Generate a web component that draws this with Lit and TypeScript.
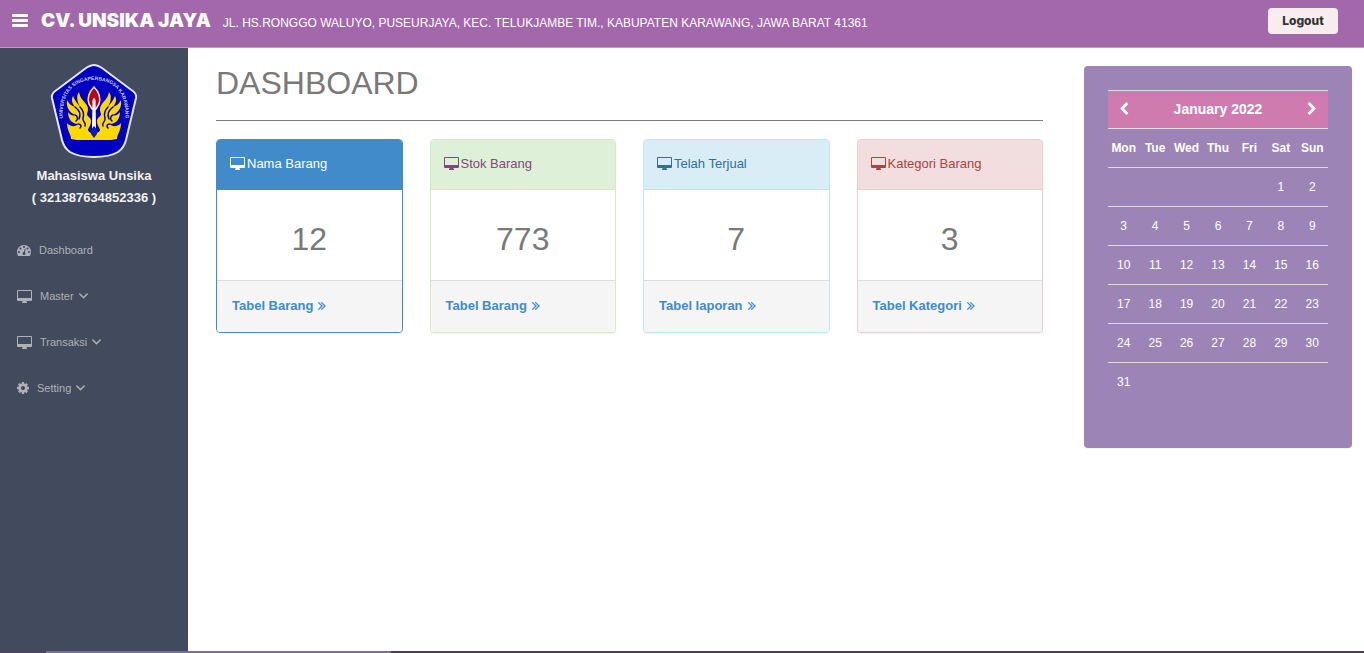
import { LitElement, html, css, svg, nothing } from "lit";
import { customElement, property, state } from "lit/decorators.js";

type Glyph = { box: string; path: string };

const GLYPHS: Record<string, Glyph> = {
  bars: {
    box: "0 0 16 14",
    path: "M1 0h14q1 0 1 1v1q0 1-1 1H1q-1 0-1-1V1q0-1 1-1zM1 5h14q1 0 1 1v1q0 1-1 1H1q-1 0-1-1V6q0-1 1-1zM1 10h14q1 0 1 1v1q0 1-1 1H1q-1 0-1-1v-1q0-1 1-1z",
  },
  desktop: {
    box: "0 0 15 13",
    path: "M1 0h13q1 0 1 1v9q0 1-1 1h-4.500v1h.5v1h-5v-1h.5v-1H1q-1 0-1-1V1q0-1 1-1zM1 1v7h13V1z",
  },
  gauge: {
    box: "0 128 1792 1536",
    path: "M384 1152q0-53-37.500-90.500t-90.500-37.500-90.500 37.500-37.500 90.500 37.500 90.500 90.500 37.500 90.500-37.500 37.500-90.500zm192-448q0-53-37.500-90.500t-90.500-37.500-90.500 37.500-37.500 90.500 37.500 90.500 90.500 37.500 90.500-37.500 37.500-90.500zm428 481l101-382q6-26-7.500-48.500t-38.500-29.500-48 6.500-30 39.500l-101 382q-60 5-107 43.500t-63 98.500q-20 77 20 146t117 89 146-20 89-117q16-60-6-117t-72-91zm660-33q0-53-37.500-90.500t-90.500-37.500-90.500 37.500-37.500 90.500 37.500 90.500 90.500 37.500 90.500-37.500 37.500-90.500zm-640-640q0-53-37.500-90.500t-90.500-37.500-90.500 37.500-37.500 90.500 37.500 90.500 90.500 37.500 90.500-37.500 37.500-90.500zm448 192q0-53-37.500-90.500t-90.500-37.500-90.500 37.500-37.500 90.500 37.500 90.500 90.500 37.500 90.500-37.500 37.500-90.500zm320 448q0 261-141 483-19 29-54 29h-1402q-35 0-54-29-141-221-141-483 0-182 71-348t191-286 286-191 348-71 348 71 286 191 191 286 71 348z",
  },
  cog: {
    box: "128 128 1536 1536",
    path: "M1152 896q0-106-75-181t-181-75-181 75-75 181 75 181 181 75 181-75 75-181zm512-109v222q0 12-8 23t-20 13l-185 28q-19 54-39 91 35 50 107 138 10 12 10 25t-9 23q-27 37-99 108t-94 71q-12 0-26-9l-138-108q-44 23-91 38-16 136-29 186-7 28-36 28h-222q-14 0-24.500-8.500t-11.500-21.500l-28-184q-49-16-90-37l-141 107q-10 9-25 9-14 0-25-11-126-114-165-168-7-10-7-23 0-12 8-23 15-21 51-66.500t54-70.500q-27-50-41-99l-183-27q-13-2-21-12.500t-8-23.500v-222q0-12 8-23t19-13l186-28q14-46 39-92-40-57-107-138-10-12-10-24 0-10 9-23 26-36 98.500-107.500t94.500-71.500q13 0 26 10l138 107q44-23 91-38 16-136 29-186 7-28 36-28h222q14 0 24.500 8.500t11.500 21.500l28 184q49 16 90 37l142-107q9-9 24-9 13 0 25 10 129 119 165 170 7 8 7 22 0 12-8 23-15 21-51 66.500t-54 70.500q26 50 41 98l183 28q13 2 21 12.500t8 23.500z",
  },
  down: {
    box: "384 640 1024 640",
    path: "M1395 736q0 13-10 23l-466 466q-10 10-23 10t-23-10l-466-466q-10-10-10-23t10-23l50-50q10-10 23-10t23 10l393 393 393-393q10-10 23-10t23 10l50 50q10 10 10 23z",
  },
  more: {
    box: "384 448 1024 1024",
    path: "M979 960q0 13-10 23l-466 466q-10 10-23 10t-23-10l-50-50q-10-10-10-23t10-23l393-393-393-393q-10-10-10-23t10-23l50-50q10-10 23-10t23 10l466 466q10 10 10 23zm384 0q0 13-10 23l-466 466q-10 10-23 10t-23-10l-50-50q-10-10-10-23t10-23l393-393-393-393q-10-10-10-23t10-23l50-50q10-10 23-10t23 10l466 466q10 10 10 23z",
  },
  left: {
    box: "256 0 1280 1664",
    path: "M1427 301l-531 531 531 531q19 19 19 45t-19 45l-166 166q-19 19-45 19t-45-19l-742-742q-19-19-19-45t19-45l742-742q19-19 45-19t45 19l166 166q19 19 19 45t-19 45z",
  },
  right: {
    box: "256 0 1280 1664",
    path: "M1363 877l-742 742q-19 19-45 19t-45-19l-166-166q-19-19-19-45t19-45l531-531-531-531q-19-19-19-45t19-45l166-166q19-19 45-19t45 19l742 742q19 19 19 45t-19 45z",
  },
};

const glyph = (name: string) => html`<svg class="icon ${name}" viewBox=${GLYPHS[name].box} aria-hidden="true">
  <path d=${GLYPHS[name].path} fill="currentColor" fill-rule="evenodd"></path>
</svg>`;

const iconStyles = css`
  .icon { display: block; flex: none; }
  .icon.bars { width: 16px; height: 14px; }
  .icon.desktop { width: 15px; height: 13px; }
  .icon.gauge { width: 14px; height: 12px; }
  .icon.cog { width: 12px; height: 12px; }
  .icon.down { width: 9px; height: 6px; stroke: currentColor; stroke-width: 50; }
  .icon.more { width: 8px; height: 8px; stroke: currentColor; stroke-width: 30; }
  .icon.left, .icon.right { width: 10px; height: 13px; }
`;

@customElement("campus-crest")
class CampusCrest extends LitElement {
  static styles = css`
    :host { display: block; }
    svg { display: block; width: 88px; height: 96px; }
    .motto { font: bold 5px "Liberation Sans", Arial, sans-serif; fill: #c9cdf5; }
  `;

  render() {
    const wing = svg`
      <path fill="#ffd800" d="M44 77H27L21 76C21 71 17 68 17 60C20 64 26 64 28 61C22 61 18 56 18 49C20 52 23 53 25 52C19 49 16 44 17 37C19 41 22 43 25 44C22 40 21 37 23 33C25 38 28 41 30 44C27 38 26 33 29 29C30 35 33 37 36 41C39 45 38 48 37 51C37 54 41 54 41 58C41 63 38 65 38 67C38 69 42 70 44 72z"></path>
      <path fill="none" stroke="#0000c0" stroke-width="1.500" stroke-linecap="round" d="M25 44C30 48 31 51 29 56M30 44C34 48 34 52 33 55C32 59 37 60 35 63M25 52C28 53 28 57 26 58M28 61C31 61 32 63 30 65"></path>`;
    return html`<svg viewBox="0 0 88 96" role="img" aria-label="Universitas Singaperbangsa Karawang">
      <path d="M44 2Q47 2 52 5L80 26Q87 30 86 35L76 77Q74 85 68 89 60 94 44 94T20 89Q14 85 12 77L2 35Q1 30 8 26L36 5Q41 2 44 2z" fill="#0000c0" stroke="#e4e6fa" stroke-width="2"></path>
      <path id="arc" d="M14 67C8 33 22 17 44 17S80 33 74 67" fill="none"></path>
      <text class="motto" text-anchor="middle"><textPath href="#arc" startOffset="50%">UNIVERSITAS SINGAPERBANGSA KARAWANG</textPath></text>
      <g>${wing}</g>
      <g transform="matrix(-1 0 0 1 88 0)">${wing}</g>
      <path d="M44 24C49 29 51 35 49 41L46 46H42L39 41C37 35 39 29 44 24z" fill="#c00008" stroke="#e8e8fa" stroke-width="1.500"></path>
      <path d="M42.500 37q1.500-4 3 0l.5 29h-4z" fill="#fff"></path>
      <path d="M44 63q4 4 3 8l-3 4-3-4q-1-4 3-8z" fill="#0a1fae"></path>
    </svg>`;
  }
}

@customElement("top-bar")
class TopBar extends LitElement {
  static styles = [iconStyles, css`
    :host { display: block; }
    .bar {
      display: flex; align-items: flex-start; height: 47px; padding: 0 26px 0 12px;
      background: #a367ab; border-bottom: 1px solid #c9a17c; color: #fff;
    }
    .toggle { margin: 14px 13px 0 0; padding: 0; border: 0; background: none; color: #fff; }
    .brand { font: 900 19px/24px Inter, "Liberation Sans", sans-serif; color: #fff; text-decoration: none; margin-top: 9px; white-space: nowrap; }
    .address { flex: 1; min-width: 0; margin: 14px 0 0 12px; font-size: 12px; line-height: 18px; }
    .logout {
      width: 70px; height: 26px; margin-top: 8px; padding: 0; border: 0; border-radius: 4px;
      background: #f9ecee; color: #333; font: 800 12px/26px Inter, "Liberation Sans", sans-serif;
    }
  `];

  render() {
    return html`<header class="bar">
      <button class="toggle" aria-label="Toggle navigation">${glyph("bars")}</button>
      <a class="brand" href="#">CV. UNSIKA JAYA</a>
      <div class="address">JL. HS.RONGGO WALUYO, PUSEURJAYA, KEC. TELUKJAMBE TIM., KABUPATEN KARAWANG, JAWA BARAT 41361</div>
      <button class="logout">Logout</button>
    </header>`;
  }
}

@customElement("side-nav")
class SideNav extends LitElement {
  static styles = [iconStyles, css`
    :host { display: block; background: #424a5d; color: #f2f2f2; }
    .profile { display: flex; flex-direction: column; align-items: center; padding-top: 15px; }
    .person { margin: 0; padding-top: 6px; font-size: 13px; font-weight: bold; line-height: 22px; text-align: center; }
    .menu { list-style: none; margin: 0; padding: 18px 17px 0; }
    .link {
      display: flex; align-items: center; height: 46px;
      color: #aeb2b7; font-size: 11px; text-decoration: none;
    }
    .label { margin: 0 5px 0 8px; }
  `];

  private items = [
    { icon: "gauge", label: "Dashboard", sub: false },
    { icon: "desktop", label: "Master", sub: true },
    { icon: "desktop", label: "Transaksi", sub: true },
    { icon: "cog", label: "Setting", sub: true },
  ];

  render() {
    return html`
      <div class="profile">
        <campus-crest></campus-crest>
        <p class="person">Mahasiswa Unsika<br>( 321387634852336 )</p>
      </div>
      <nav><ul class="menu">
        ${this.items.map((i) => html`<li><a class="link" href="#">
          ${glyph(i.icon)}<span class="label">${i.label}</span>${i.sub ? glyph("down") : nothing}
        </a></li>`)}
      </ul></nav>`;
  }
}

@customElement("stat-card")
class StatCard extends LitElement {
  @property() label = "";
  @property() value = "";
  @property() link = "";
  @property() tone = "primary";

  static styles = [iconStyles, css`
    :host { display: block; min-width: 0; }
    .card { border: 1px solid var(--edge); border-radius: 4px; overflow: hidden; background: #fff; box-shadow: 0 1px 1px rgba(0, 0, 0, 0.05); }
    .primary { --edge: #428bca; --fill: #428bca; --ink: #fff; }
    .success { --edge: #d6e9c6; --fill: #dff0d8; --ink: #83477b; }
    .info { --edge: #bce8f1; --fill: #d9edf7; --ink: #31708f; }
    .danger { --edge: #ebccd1; --fill: #f2dede; --ink: #a94442; }
    .head {
      display: flex; align-items: center; gap: 2px; margin: 0; padding: 14px 13px 16px; height: 19px;
      background: var(--fill); border-bottom: 1px solid var(--edge);
      color: var(--ink); font-size: 13px; font-weight: normal;
    }
    .value { padding: 29px 0 21px; font-size: 32px; line-height: 40px; text-align: center; color: #797979; }
    .foot { padding: 14px 15px 16px; border-top: 1px solid #ddd; background: #f5f5f5; }
    .more-link { display: flex; align-items: center; gap: 5px; line-height: 21px; font-size: 13px; font-weight: bold; color: #428bca; text-decoration: none; }
  `];

  render() {
    return html`<section class="card ${this.tone}">
      <h2 class="head">${glyph("desktop")}<span>${this.label}</span></h2>
      <div class="value">${this.value}</div>
      <div class="foot"><a class="more-link" href="#"><span>${this.link}</span>${glyph("more")}</a></div>
    </section>`;
  }
}

@customElement("month-calendar")
class MonthCalendar extends LitElement {
  @state() private year = 2022;
  @state() private month = 0;

  static styles = [iconStyles, css`
    :host { display: block; }
    .panel { padding: 24px 24px 47px; border-radius: 4px; background: #9d84b7; box-shadow: 0 1px 1px rgba(0, 0, 0, 0.05); }
    .grid { width: 100%; table-layout: fixed; border-collapse: collapse; color: #fff; font-size: 12px; text-align: center; }
    .grid th, .grid td { height: 38px; padding: 0; border-top: 1px solid #ddd; }
    .grid .bar { background: #cf7bb0; font-size: 14px; height: 35px; padding-bottom: 2px; }
    .step { display: block; margin: 0 auto; padding: 0; border: 0; background: none; color: #fff; }
  `];

  private move(by: number) {
    const next = new Date(this.year, this.month + by, 1);
    this.year = next.getFullYear();
    this.month = next.getMonth();
  }

  render() {
    const first = (new Date(this.year, this.month, 1).getDay() + 6) % 7;
    const total = new Date(this.year, this.month + 1, 0).getDate();
    const weeks = Array.from({ length: Math.ceil((first + total) / 7) }, (_, w) =>
      Array.from({ length: 7 }, (_, d) => {
        const day = w * 7 + d - first + 1;
        return day > 0 && day <= total ? String(day) : "";
      }));
    const title = new Date(this.year, this.month, 1).toLocaleString("en-US", { month: "long", year: "numeric" });
    return html`<div class="panel"><table class="grid">
      <thead>
        <tr>
          <th class="bar"><button class="step" aria-label="Previous month" @click=${() => this.move(-1)}>${glyph("left")}</button></th>
          <th class="bar" colspan="5">${title}</th>
          <th class="bar"><button class="step" aria-label="Next month" @click=${() => this.move(1)}>${glyph("right")}</button></th>
        </tr>
        <tr>${["Mon", "Tue", "Wed", "Thu", "Fri", "Sat", "Sun"].map((d) => html`<th scope="col">${d}</th>`)}</tr>
      </thead>
      <tbody>${weeks.map((w) => html`<tr>${w.map((d) => html`<td>${d}</td>`)}</tr>`)}</tbody>
    </table></div>`;
  }
}

@customElement("app-root")
class AppRoot extends LitElement {
  static styles = css`
    :host {
      display: flex; flex-direction: column; min-height: 100vh; background: #fff; color: #797979;
      font-family: "Liberation Sans", Arial, sans-serif;
    }
    .body { flex: 1; display: grid; grid-template-columns: 188px minmax(0, 1fr); }
    .content { display: grid; grid-template-columns: minmax(0, 1fr) 268px; gap: 41px; align-items: start; padding: 18px 12px 18px 28px; }
    .title { margin: 0 0 18px; padding-bottom: 20px; border-bottom: 1px solid #797979; font-size: 32px; font-weight: normal; line-height: 34px; }
    .cards { display: grid; grid-template-columns: repeat(4, minmax(0, 1fr)); gap: 27px; }
    .edge { height: 2px; background: linear-gradient(90deg, #543d64 46px, #7b6e8f 46px, #7b6e8f 391px, #4d3c60 391px); }
  `;

  render() {
    return html`
      <top-bar></top-bar>
      <div class="body">
        <side-nav></side-nav>
        <main class="content">
          <div>
            <h1 class="title">DASHBOARD</h1>
            <div class="cards">
              <stat-card tone="primary" label="Nama Barang" value="12" link="Tabel Barang"></stat-card>
              <stat-card tone="success" label="Stok Barang" value="773" link="Tabel Barang"></stat-card>
              <stat-card tone="info" label="Telah Terjual" value="7" link="Tabel laporan"></stat-card>
              <stat-card tone="danger" label="Kategori Barang" value="3" link="Tabel Kategori"></stat-card>
            </div>
          </div>
          <month-calendar></month-calendar>
        </main>
      </div>
      <div class="edge"></div>`;
  }
}
